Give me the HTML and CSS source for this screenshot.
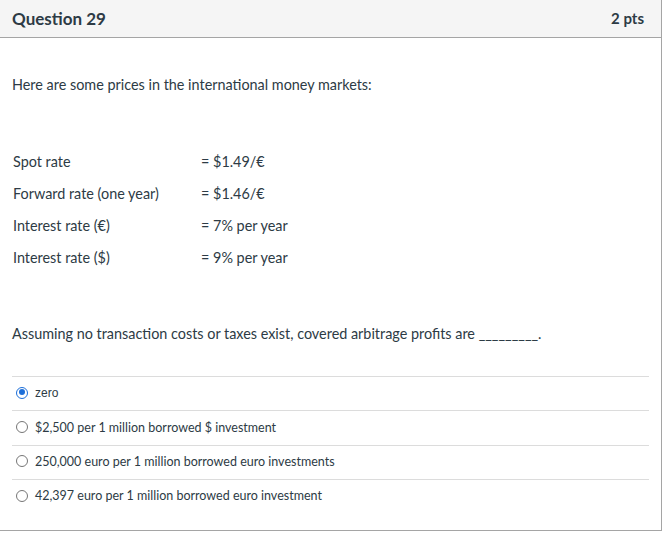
FILE: index.html
```html
<!DOCTYPE html>
<html>
<head>
<meta charset="utf-8">
<link rel="stylesheet" href="styles.css">
</head>
<body>
<div class="question">
  <div class="header">
    <span class="title">Question 29</span>
    <span class="pts">2 pts</span>
  </div>
  <div class="body">
    <p class="intro">Here are some prices in the international money markets:</p>
    <div class="rates">
      <div class="row"><span class="label">Spot rate</span><span>= $1.49/€</span></div>
      <div class="row"><span class="label">Forward rate (one year)</span><span>= $1.46/€</span></div>
      <div class="row"><span class="label">Interest rate (€)</span><span>= 7% per year</span></div>
      <div class="row"><span class="label">Interest rate ($)</span><span>= 9% per year</span></div>
    </div>
    <p class="prompt">Assuming no transaction costs or taxes exist, covered arbitrage profits are _________.</p>
    <div class="answers">
      <div class="answer"><span class="radio checked"></span><span class="zero">zero</span></div>
      <div class="answer"><span class="radio"></span><span>$2,500 per 1 million borrowed $ investment</span></div>
      <div class="answer"><span class="radio"></span><span>250,000 euro per 1 million borrowed euro investments</span></div>
      <div class="answer"><span class="radio"></span><span>42,397 euro per 1 million borrowed euro investment</span></div>
    </div>
  </div>
</div>
</body>
</html>
```
FILE: styles.css
```css
html, body { margin: 0; padding: 0; background: #fff; }
body { font-family: Lato, "Liberation Sans", sans-serif; color: #2d3b45; }
.question {
  width: 662px;
  border-right: 1px solid #a5a5a5;
  border-bottom: 1px solid #a5a5a5;
  height: 531px;
  box-sizing: border-box;
  display: flex;
  flex-direction: column;
}
.header {
  height: 38px;
  box-sizing: border-box;
  background: #f5f5f5;
  border-bottom: 1px solid #a5a5a5;
  display: flex;
  justify-content: space-between;
  align-items: center;
  padding: 0 17px 1px 12px;
  font-weight: bold;
  color: #2d3b45;
}
.title { font-size: 17px; }
.pts { font-size: 15px; }
.body { padding: 0 12px; font-size: 14.4px; }
.intro { margin: 37px 0 0; line-height: 19px; }
.rates { margin-top: 58px; display: flex; flex-direction: column; gap: 13px; padding-left: 1px; }
.row { display: flex; line-height: 19px; }
.label { width: 188px; }
.prompt { margin: 57px 0 0; line-height: 19px; }
.answers { margin-top: 33px; }
.answer {
  border-top: 1px solid #dcdcdc;
  height: 34.4px;
  box-sizing: border-box;
  display: flex;
  align-items: center;
  padding-left: 4px;
  padding-bottom: 2px;
  font-size: 12.5px;
  gap: 7px;
}
.zero { font-family: "Liberation Sans", Arial, sans-serif; font-size: 12px; }
.radio {
  width: 12px; height: 12px;
  border: 1px solid #767676;
  border-radius: 50%;
  box-sizing: border-box;
  display: inline-block;
  position: relative;
}
.radio.checked { border: 1.5px solid #1d6fd9; }
.radio.checked::after {
  content: "";
  position: absolute;
  left: 1.5px; top: 1.5px;
  width: 6px; height: 6px;
  border-radius: 50%;
  background: #1d6fd9;
}
```
